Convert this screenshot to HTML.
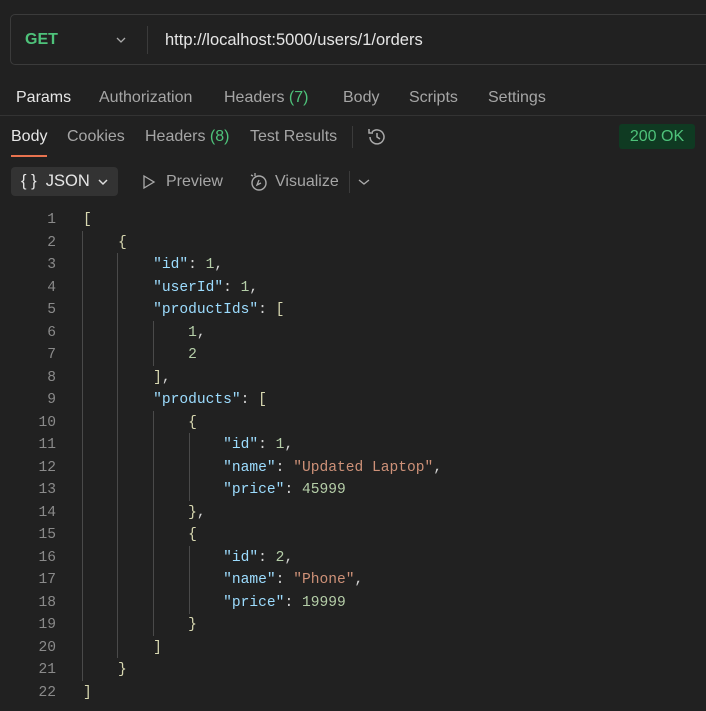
<!DOCTYPE html>
<html><head><style>
body{margin:0;width:706px;height:711px;background:#212121;overflow:hidden;font-family:"Liberation Sans",sans-serif;color:#a6a6a6;position:relative}
.a{position:absolute;white-space:nowrap}
.url{position:absolute;left:10px;top:14px;width:710px;height:51px;border:1px solid #3b3b3b;border-radius:5px;box-sizing:border-box}
.t{font-size:16px}
.code{position:absolute;left:0;top:209px;width:706px;height:500px;font-family:"Liberation Mono",monospace;font-size:14.6px;line-height:22.5px;white-space:pre}
.ln{position:absolute;left:0;top:0;width:56px;text-align:right;color:#8a8a8a}
.c{position:absolute;left:83px;top:0;color:#d4d4d4}
.k{color:#9cdcfe}.n{color:#b5cea8}.s{color:#ce9178}.p{color:#d7d7b0}
.g{position:absolute;width:1px;background:#4a4a4a}
</style></head><body>
<div class="url"></div>
<div class="a" style="left:25px;top:31px;font-size:16px;font-weight:bold;color:#4ec27a">GET</div>
<svg class="a" style="left:115px;top:35px" width="12" height="10"><path d="M2 3l4 4 4-4" stroke="#aaa" fill="none" stroke-width="1.3"/></svg>
<div class="a" style="left:147px;top:26px;width:1px;height:28px;background:#3b3b3b"></div>
<div class="a" style="left:165px;top:31px;font-size:16.5px;color:#e6e6e6">http://localhost:5000/users/1/orders</div>
<div class="a t" style="left:16px;top:89px;color:#e6e6e6">Params</div>
<div class="a t" style="left:99px;top:89px">Authorization</div>
<div class="a t" style="left:224px;top:89px">Headers <span style="color:#4ec27a">(7)</span></div>
<div class="a t" style="left:343px;top:89px">Body</div>
<div class="a t" style="left:409px;top:89px">Scripts</div>
<div class="a t" style="left:488px;top:89px">Settings</div>
<div class="a" style="left:0;top:115px;width:706px;height:1px;background:#333"></div>
<div class="a t" style="left:11px;top:128px;color:#e6e6e6">Body</div>
<div class="a" style="left:11px;top:155px;width:36px;height:2px;background:#e8734f"></div>
<div class="a t" style="left:67px;top:128px">Cookies</div>
<div class="a t" style="left:145px;top:128px">Headers <span style="color:#4ec27a">(8)</span></div>
<div class="a t" style="left:250px;top:128px">Test Results</div>
<div class="a" style="left:352px;top:126px;width:1px;height:22px;background:#3b3b3b"></div>
<svg class="a" style="left:366px;top:126px" width="22" height="22" viewBox="0 0 22 22"><path d="M4 11a7 7 0 1 0 2-5M3 3v4h4M11 7v4l3 2" stroke="#aaa" fill="none" stroke-width="1.5"/></svg>
<div class="a" style="left:619px;top:124px;width:76px;height:25px;background:#0f3a22;border-radius:3px;color:#4ec27a;font-size:16px;text-align:center;line-height:25px">200 OK</div>
<div class="a" style="left:11px;top:167px;width:107px;height:29px;background:#333;border-radius:4px"></div>
<div class="a" style="left:21px;top:172px;font-size:16.5px;color:#e6e6e6">{ }&nbsp; JSON</div>
<svg class="a" style="left:97px;top:177px" width="12" height="10"><path d="M2 3l4 4 4-4" stroke="#ddd" fill="none" stroke-width="1.5"/></svg>
<svg class="a" style="left:142px;top:174px" width="14" height="16"><path d="M2 2l10 6-10 6z" stroke="#aaa" fill="none" stroke-width="1.3"/></svg>
<div class="a t" style="left:166px;top:173px">Preview</div>
<svg class="a" style="left:247px;top:171px" width="22" height="22" viewBox="0 0 22 22"><circle cx="12" cy="12" r="7" stroke="#aaa" fill="none" stroke-width="1.4"/><path d="M4 4l2 1M8 2v3M12 9l-2 5 4-2" stroke="#aaa" fill="none" stroke-width="1.3"/></svg>
<div class="a t" style="left:275px;top:173px">Visualize</div>
<div class="a" style="left:349px;top:171px;width:1px;height:22px;background:#3b3b3b"></div>
<svg class="a" style="left:357px;top:177px" width="14" height="10"><path d="M2 3l5 4 5-4" stroke="#aaa" fill="none" stroke-width="1.4"/></svg>

<div class="g" style="left:82px;top:231px;height:450px"></div>
<div class="g" style="left:117px;top:253px;height:405px"></div>
<div class="g" style="left:153px;top:321px;height:45px"></div>
<div class="g" style="left:153px;top:411px;height:225px"></div>
<div class="g" style="left:189px;top:433px;height:68px"></div>
<div class="g" style="left:189px;top:546px;height:68px"></div>

<div class="code"><div class="ln">1
2
3
4
5
6
7
8
9
10
11
12
13
14
15
16
17
18
19
20
21
22</div><div class="c"><span class="p">[</span>
    <span class="p">{</span>
        <span class="k">"id"</span>: <span class="n">1</span>,
        <span class="k">"userId"</span>: <span class="n">1</span>,
        <span class="k">"productIds"</span>: <span class="p">[</span>
            <span class="n">1</span>,
            <span class="n">2</span>
        <span class="p">]</span>,
        <span class="k">"products"</span>: <span class="p">[</span>
            <span class="p">{</span>
                <span class="k">"id"</span>: <span class="n">1</span>,
                <span class="k">"name"</span>: <span class="s">"Updated Laptop"</span>,
                <span class="k">"price"</span>: <span class="n">45999</span>
            <span class="p">}</span>,
            <span class="p">{</span>
                <span class="k">"id"</span>: <span class="n">2</span>,
                <span class="k">"name"</span>: <span class="s">"Phone"</span>,
                <span class="k">"price"</span>: <span class="n">19999</span>
            <span class="p">}</span>
        <span class="p">]</span>
    <span class="p">}</span>
<span class="p">]</span></div></div>
</body></html>
